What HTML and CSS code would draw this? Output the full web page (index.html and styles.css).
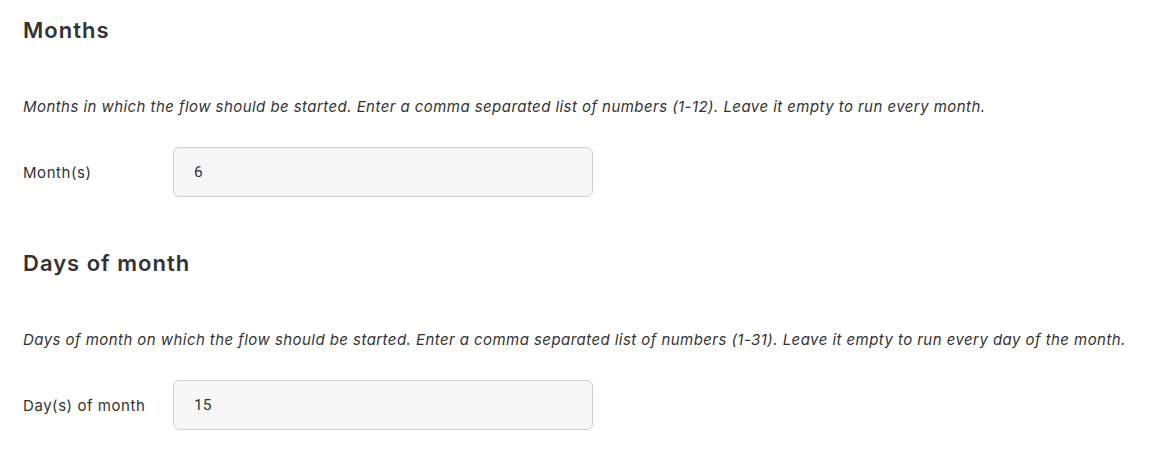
FILE: index.html
```html
<!DOCTYPE html>
<html lang="en">
<head>
	<meta charset="UTF-8">
	<title>Schedule</title>
	<link rel="stylesheet" href="styles.css">
</head>
<body>
	<div class="section">
		<h2 class="title">Months</h2>
		<p class="desc">Months in which the flow should be started. Enter a comma separated list of numbers (1-12). Leave it empty to run every month.</p>
		<div class="row">
			<label class="label">Month(s)</label>
			<div class="field">6</div>
		</div>
	</div>
	<div class="section">
		<h2 class="title">Days of month</h2>
		<p class="desc">Days of month on which the flow should be started. Enter a comma separated list of numbers (1-31). Leave it empty to run every day of the month.</p>
		<div class="row">
			<label class="label">Day(s) of month</label>
			<div class="field">15</div>
		</div>
	</div>
</body>
</html>
```

FILE: styles.css
```css
* {
	padding: 0;
	margin: 0;
	box-sizing: border-box;
}
body {
	background: #fff;
	color: #333;
	font-family: "Inter", "Liberation Sans", sans-serif;
	padding: 16px 23px 0;
}
.section {
	height: 233px;
}
.title {
	font-size: 22px;
	font-weight: 600;
	line-height: 28px;
	letter-spacing: 1px;
	color: #333;
}
.desc {
	margin-top: 53px;
	font-size: 15px;
	font-style: italic;
	line-height: 20px;
	letter-spacing: 0.44px;
	color: #333;
}
.row {
	display: flex;
	align-items: center;
	margin-top: 30px;
}
.label {
	width: 150px;
	font-size: 15px;
	letter-spacing: 0.55px;
	color: #333;
}
.field {
	width: 420px;
	height: 50px;
	padding: 0 20px;
	line-height: 48px;
	font-family: "Roboto", "Liberation Sans", sans-serif;
	font-size: 15.5px;
	color: #333;
	background: #f7f7f7;
	border: 1px solid #cfcfcf;
	border-radius: 6px;
}
```
